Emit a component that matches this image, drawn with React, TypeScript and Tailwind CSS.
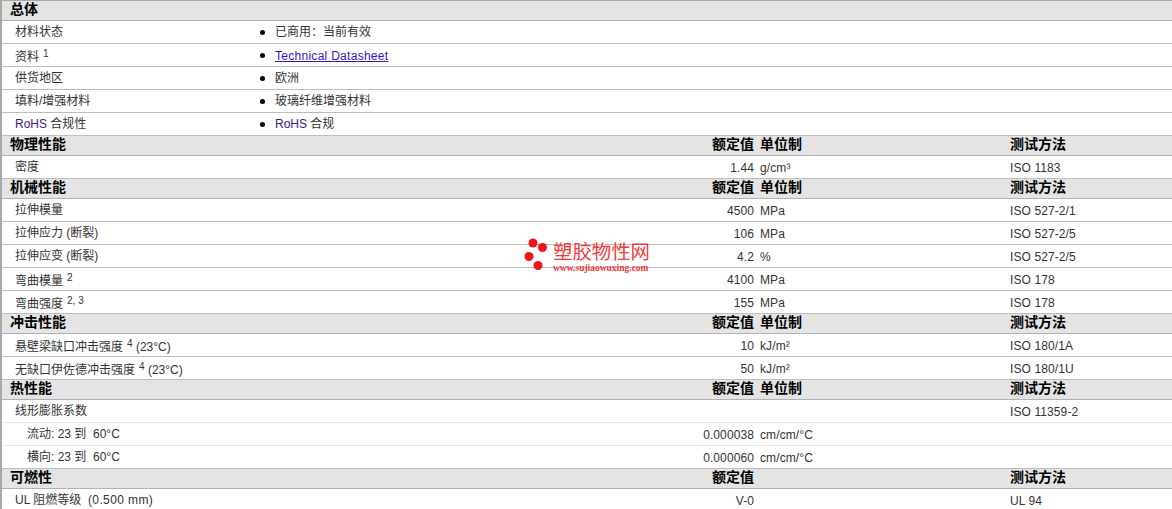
const font = '[font-family:"Liberation_Sans","Noto_Sans_CJK_SC",sans-serif]';

function Header({ title, value = true, unit = true, test = true }: { title: string; value?: boolean; unit?: boolean; test?: boolean }) {
  return (
    <div className="flex h-5 items-center border-b border-[#b3b0bb] bg-[#e4e4e4] pb-0.5 text-[14px] font-bold text-black">
      <div className="w-[710px] pl-2">{title}</div>
      <div className="w-[42px] whitespace-nowrap text-right">{value ? '额定值' : ''}</div>
      <div className="ml-1.5 w-[250px] whitespace-nowrap">{unit ? '单位制' : ''}</div>
      <div>{test ? '测试方法' : ''}</div>
    </div>
  );
}

function Info({ label, children }: { label: React.ReactNode; children: React.ReactNode }) {
  return (
    <div className="flex h-[23px] items-center border-b border-[#bdbdbd] text-[12px] text-[#333]">
      <div className="w-[258px] pl-[13px]">{label}</div>
      <span className="mr-2.5 size-[5px] rounded-full bg-black" />
      <div>{children}</div>
    </div>
  );
}

function Row({ label, value, unit, test, light }: { label: React.ReactNode; value?: string; unit?: string; test?: string; light?: boolean }) {
  return (
    <div className={`flex h-[23px] items-center border-b text-[12px] text-[#333] ${light ? 'border-[#e8e6ee]' : 'border-[#bdbdbd]'}`}>
      <div className="w-[650px] whitespace-nowrap pl-[13px]">{label}</div>
      <div className="w-[102px] pt-0.5 text-right tracking-[0.1px]">{value}</div>
      <div className="ml-1.5 w-[250px] pt-0.5 tracking-[0.1px]">{unit}</div>
      <div className="pt-0.5 tracking-[0.1px]">{test}</div>
    </div>
  );
}

// label that carries a footnote sits a little lower in its row
function Noted({ note, children, after }: { note: string; children: string; after?: string }) {
  return (
    <span className="relative top-[1.5px]">
      {children}
      <sup className="relative -top-[4px] ml-1 text-[10px]">{note}</sup>
      {after}
    </span>
  );
}

export default function App() {
  return (
    <div className={`relative h-[509px] w-[1172px] overflow-hidden border-l-2 border-t border-[#a8a8a8] bg-white ${font}`}>
      <Header title="总体" value={false} unit={false} test={false} />
      <Info label="材料状态">已商用：当前有效</Info>
      <Info label={<Noted note="1">资料</Noted>}>
        <a href="#" className="relative top-px tracking-[0.28px] text-[#3a10c8] underline">Technical Datasheet</a>
      </Info>
      <Info label="供货地区">欧洲</Info>
      <Info label="填料/增强材料">玻璃纤维增强材料</Info>
      <Info label={<><span className="text-[#3b1a8c]">RoHS</span> 合规性</>}>
        <span className="text-[#3b1a8c]">RoHS</span> 合规
      </Info>

      <Header title="物理性能" />
      <Row label="密度" value="1.44" unit="g/cm³" test="ISO 1183" />

      <Header title="机械性能" />
      <Row label="拉伸模量" value="4500" unit="MPa" test="ISO 527-2/1" />
      <Row label="拉伸应力 (断裂)" value="106" unit="MPa" test="ISO 527-2/5" />
      <Row label="拉伸应变 (断裂)" value="4.2" unit="%" test="ISO 527-2/5" />
      <Row label={<Noted note="2">弯曲模量</Noted>} value="4100" unit="MPa" test="ISO 178" />
      <Row label={<Noted note="2, 3">弯曲强度</Noted>} value="155" unit="MPa" test="ISO 178" />

      <Header title="冲击性能" />
      <Row label={<Noted note="4" after=" (23°C)">悬壁梁缺口冲击强度</Noted>} value="10" unit="kJ/m²" test="ISO 180/1A" />
      <Row label={<Noted note="4" after=" (23°C)">无缺口伊佐德冲击强度</Noted>} value="50" unit="kJ/m²" test="ISO 180/1U" />

      <Header title="热性能" />
      <Row label="线形膨胀系数" test="ISO 11359-2" light />
      <Row label={<span className="pl-3">流动: 23 到&nbsp; 60°C</span>} value="0.000038" unit="cm/cm/°C" light />
      <Row label={<span className="pl-3">横向: 23 到&nbsp; 60°C</span>} value="0.000060" unit="cm/cm/°C" />

      <Header title="可燃性" unit={false} />
      <Row label={<>UL 阻燃等级&nbsp; <span className="tracking-[0.4px]">(0.500 mm)</span></>} value="V-0" test="UL 94" />

      {/* watermark */}
      <div className="absolute left-[522px] top-[237px] flex items-start">
        <svg width="29" height="33" viewBox="0 0 29 33" className="fill-[#f01414]">
          <circle cx="9" cy="5" r="4.5" />
          <circle cx="18.5" cy="9.5" r="4.5" />
          <circle cx="5" cy="18.5" r="4.5" />
          <circle cx="14" cy="27.5" r="4.5" />
        </svg>
        <div className="pt-[4px] text-[#f23a3a]">
          <div className="text-[19.4px] leading-[21px]">塑胶物性网</div>
          <div className="whitespace-nowrap font-['Liberation_Serif',serif] text-[9.5px] font-bold leading-[11px]">www.sujiaowuxing.com</div>
        </div>
      </div>
    </div>
  );
}
